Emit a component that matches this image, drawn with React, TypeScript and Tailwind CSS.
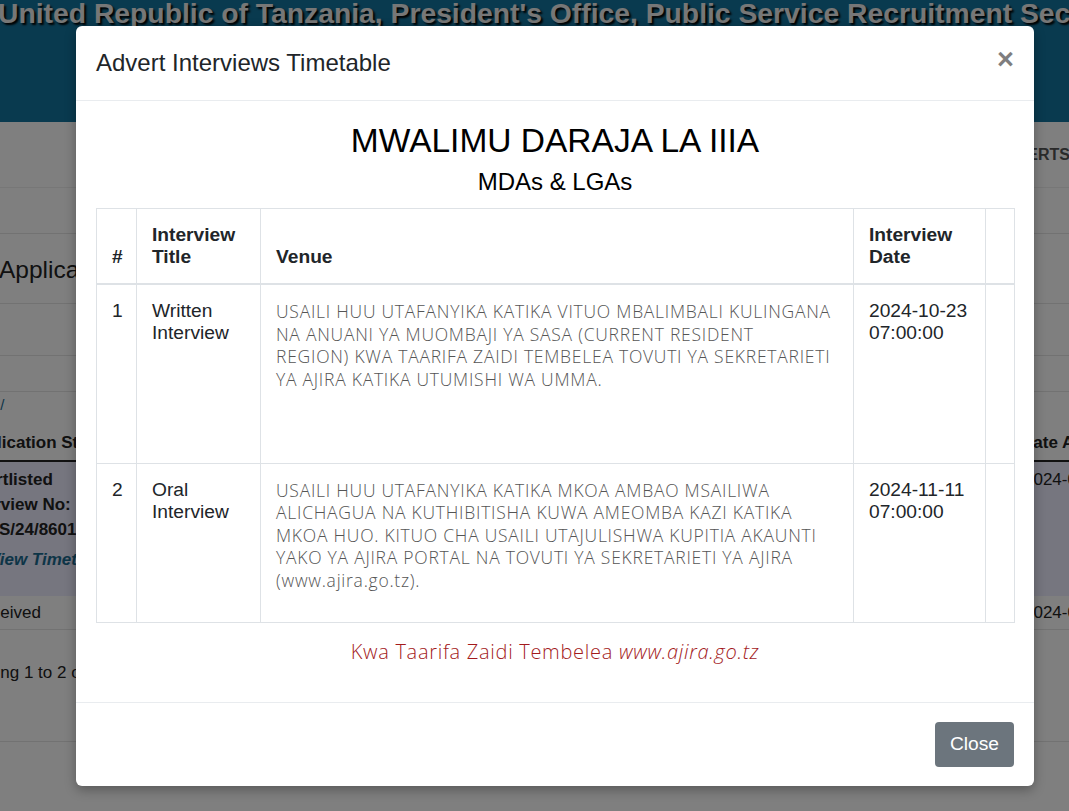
const venueFont = "font-['Open_Sans','Noto_Sans',sans-serif]";

// Venue lines are kept as the reference wraps them
const rows = [
  {
    no: 1,
    title: ["Written", "Interview"],
    venue: [
      "USAILI HUU UTAFANYIKA KATIKA VITUO MBALIMBALI KULINGANA",
      "NA ANUANI YA MUOMBAJI YA SASA (CURRENT RESIDENT",
      "REGION) KWA TAARIFA ZAIDI TEMBELEA TOVUTI YA SEKRETARIETI",
      "YA AJIRA KATIKA UTUMISHI WA UMMA.",
    ],
    date: ["2024-10-23", "07:00:00"],
    height: "h-[179px]",
  },
  {
    no: 2,
    title: ["Oral", "Interview"],
    venue: [
      "USAILI HUU UTAFANYIKA KATIKA MKOA AMBAO MSAILIWA",
      "ALICHAGUA NA KUTHIBITISHA KUWA AMEOMBA KAZI KATIKA",
      "MKOA HUO. KITUO CHA USAILI UTAJULISHWA KUPITIA AKAUNTI",
      "YAKO YA AJIRA PORTAL NA TOVUTI YA SEKRETARIETI YA AJIRA",
      "(www.ajira.go.tz).",
    ],
    date: ["2024-11-11", "07:00:00"],
    height: "h-[159px]",
  },
];

const BackgroundPage = () => {
  return (
    <div className="flex flex-col">
      {/* Top banner */}
      <div className="h-[122px] bg-[#13749e] overflow-hidden">
        <h1 className="-ml-[2px] -mt-[3px] whitespace-nowrap text-[28.3px] font-bold leading-[32px] text-[#eeeeee] [text-shadow:2px_2px_2px_#000]">
          United Republic of Tanzania, President's Office, Public Service Recruitment Secretariat
        </h1>
      </div>

      {/* Nav */}
      <div className="flex h-[66px] items-center justify-end gap-8 overflow-hidden border-b border-[#eeeeee] text-[16px] font-semibold text-[#555]">
        <span className="whitespace-nowrap">HOME</span>
        <span className="-mr-[1px] whitespace-nowrap">MY ADVERTS</span>
      </div>

      <div className="h-[46px] border-b border-[#e5e5e5]" />

      <div className="-ml-[1px] flex h-[70px] items-center border-b border-[#e5e5e5] pt-[3px] text-[24.5px] text-[#222]">
        Applications
      </div>
      <div className="h-[52px] border-b border-[#e5e5e5]" />
      <div className="h-[36px] border-b border-[#e5e5e5]" />

      <div className="-ml-[44px] flex h-[26px] items-center whitespace-nowrap text-[15px] text-[#1a6a8f]">Home /</div>

      {/* Applications table */}
      <div className="-ml-[52px] w-[1200px] text-[17px] text-[#222]">
        <div className="mt-[8px] flex h-[36px] items-center border-b-2 border-[#222] font-bold">
          <div className="w-[1073px] shrink-0 px-4">Application Status</div>
          <div className="shrink-0 whitespace-nowrap">Date Applied</div>
        </div>
        <div className="flex h-[134px] bg-[#ececff] pt-[5px] leading-[25px]">
          <div className="w-[1076px] shrink-0 px-4 font-bold">
            <div>Shortlisted</div>
            <div>Interview No:</div>
            <div>PSRS/24/8601/1</div>
            <div className="ml-[25px] mt-[5px] italic text-[#1a6a8f]">View Timetable</div>
          </div>
          <div className="shrink-0">2024-09-30</div>
        </div>
        <div className="flex h-[34px] items-center border-b border-[#e5e5e5]">
          <div className="w-[1076px] shrink-0 px-4">
            <span className="ml-[6px]">Received</span>
          </div>
          <div className="shrink-0">2024-09-12</div>
        </div>
        <div className="mt-[30px] pl-[6px]">Showing 1 to 2 of 2 entries</div>
      </div>

      <div className="mt-[55px] border-b border-[#e5e5e5]" />
    </div>
  );
};

const Modal = () => {
  return (
    <div className="flex h-[760px] w-[958px] flex-col rounded-[6px] bg-white shadow-[0_4px_12px_rgba(0,0,0,0.3)]">
      {/* Header */}
      <div className="flex h-[75px] shrink-0 items-center justify-between border-b border-[#e9ecef] px-5">
        <h5 className="text-[24px] leading-[36px] text-[#212529]">Advert Interviews Timetable</h5>
        <button className="-mt-[8px] text-[29px] font-bold leading-none text-black opacity-50">×</button>
      </div>

      {/* Body */}
      <div className="flex flex-1 flex-col px-5 pt-[21px]">
        <h2 className="text-center text-[33.5px] leading-[38px] text-black">MWALIMU DARAJA LA IIIA</h2>
        <h4 className="mt-[6px] text-center text-[24px] leading-[32px] text-black">MDAs &amp; LGAs</h4>

        <table className="mt-[10px] w-[918px] table-fixed border-collapse text-[19.2px] text-[#212529]">
          <colgroup>
            <col className="w-[40px]" />
            <col className="w-[124px]" />
            <col className="w-[593px]" />
            <col className="w-[132px]" />
            <col className="w-[29px]" />
          </colgroup>
          <thead>
            <tr className="font-bold leading-[22px]">
              <th className="border border-b-2 border-[#dee2e6] p-[15px] text-left align-bottom">#</th>
              <th className="border border-b-2 border-[#dee2e6] p-[15px] text-left align-bottom">Interview Title</th>
              <th className="border border-b-2 border-[#dee2e6] p-[15px] text-left align-bottom">Venue</th>
              <th className="border border-b-2 border-[#dee2e6] p-[15px] text-left align-bottom">Interview Date</th>
              <th className="border border-b-2 border-[#dee2e6]" />
            </tr>
          </thead>
          <tbody>
            {rows.map((row) => (
              <tr key={row.no} className={`${row.height} leading-[22px]`}>
                <td className="border border-[#dee2e6] px-[15px] pt-[15px] align-top">{row.no}</td>
                <td className="border border-[#dee2e6] px-[15px] pt-[15px] align-top">
                  <div>{row.title[0]}</div>
                  <div>{row.title[1]}</div>
                </td>
                <td
                  className={`border border-[#dee2e6] px-[15px] pt-[15px] align-top ${venueFont} text-[17.5px] font-light leading-[22.5px] tracking-[0.75px] text-[#555]`}
                >
                  {row.venue.map((line) => (
                    <div key={line} className="whitespace-nowrap">
                      {line}
                    </div>
                  ))}
                </td>
                <td className="border border-[#dee2e6] px-[15px] pt-[15px] align-top">
                  <div>{row.date[0]}</div>
                  <div>{row.date[1]}</div>
                </td>
                <td className="border border-[#dee2e6]" />
              </tr>
            ))}
          </tbody>
        </table>

        <p className={`mt-[14px] text-center text-[20px] font-light tracking-[0.7px] text-[#a31a1c] ${venueFont}`}>
          Kwa Taarifa Zaidi Tembelea <em>www.ajira.go.tz</em>
        </p>
      </div>

      {/* Footer */}
      <div className="flex h-[84px] shrink-0 items-center justify-end border-t border-[#e9ecef] px-5">
        <button className="h-[45px] w-[79px] rounded-[4px] bg-[#6c757d] text-[19.2px] text-white">Close</button>
      </div>
    </div>
  );
};

export default function App() {
  return (
    <div className="relative h-[811px] overflow-hidden bg-white font-['Liberation_Sans',Arial,sans-serif]">
      <BackgroundPage />
      <div className="absolute inset-0 bg-black/50" />
      <div className="absolute inset-0 pl-[76px] pt-[26px]">
        <Modal />
      </div>
    </div>
  );
}
